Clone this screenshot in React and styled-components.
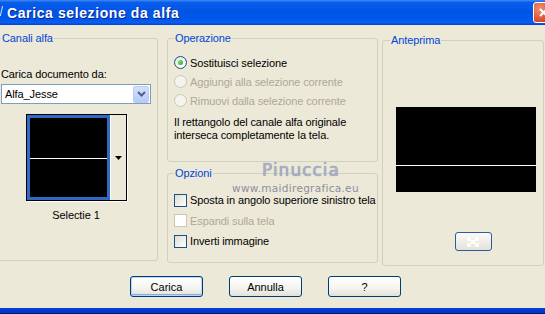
import React from "react";
import styled, { createGlobalStyle } from "styled-components";

const GlobalStyle = createGlobalStyle`
  html, body { margin: 0; padding: 0; background: #ECE9D8; }
  body {
    font-family: "Liberation Sans", Arial, sans-serif;
    font-size: 11px;
    letter-spacing: -0.1px;
    color: #000;
  }
`;

const Window = styled.div`
  width: 545px;
  height: 314px;
  display: flex;
  flex-direction: column;
  overflow: hidden;
  position: relative;
  background: #ECE9D8;
`;

const TitleBar = styled.div`
  height: 25px;
  flex: none;
  display: flex;
  align-items: center;
  overflow: hidden;
  background: linear-gradient(
    #3D8BF7 0%,
    #0A5DEB 10%,
    #0055E5 45%,
    #0058EA 80%,
    #0B5FF0 90%,
    #003FD0 100%
  );
`;

const TitleIcon = styled.svg`
  flex: none;
  width: 3px;
  height: 25px;
`;

const Title = styled.div`
  flex: 1;
  margin-left: 4px;
  color: #fff;
  font-weight: bold;
  font-size: 14px;
  letter-spacing: 0.6px;
  text-shadow: 1px 1px 0 #0A1E8C;
`;

const CloseButton = styled.div`
  flex: none;
  width: 21px;
  height: 21px;
  margin-right: -9px;
  box-sizing: border-box;
  border: 1px solid #fff;
  border-radius: 3px;
  background: radial-gradient(circle at 30% 30%, #F2906E, #D9472A 70%, #C13A1C);
  display: flex;
  align-items: center;
  justify-content: center;
`;

const Body = styled.div`
  flex: 1;
  display: flex;
  flex-direction: column;
  padding-top: 7px;
`;

const Columns = styled.div`
  display: flex;
  align-items: flex-start;
`;

const Group = styled.fieldset`
  margin: 0;
  padding: 0 6px;
  min-width: 0;
  box-sizing: border-box;
  border: 1px solid #D0D0BF;
  border-radius: 3px;
  width: ${(p) => p.$w}px;
  height: ${(p) => p.$h}px;
  margin-left: ${(p) => p.$ml || 0}px;
  margin-top: ${(p) => p.$mt || 0}px;
  display: flex;
  flex-direction: column;
`;

const Legend = styled.legend`
  padding: 0 1px;
  margin-left: ${(p) => p.$ml || 0}px;
  color: #0046D5;
  line-height: 13px;
`;

const MiddleColumn = styled.div`
  width: 211px;
  margin-left: 9px;
  display: flex;
  flex-direction: column;
  gap: 5px;
`;

const Label = styled.div`
  line-height: 13px;
  margin-top: ${(p) => p.$mt || 0}px;
`;

const Select = styled.div`
  margin-top: 3px;
  width: 150px;
  height: 20px;
  box-sizing: border-box;
  border: 1px solid #7F9DB9;
  background: #fff;
  display: flex;
  align-items: center;
  padding-left: 3px;
  padding-right: 1px;
`;

const SelectValue = styled.span`
  flex: 1;
`;

const DropButton = styled.div`
  width: 16px;
  height: 17px;
  border-radius: 2px;
  box-sizing: border-box;
  border: 1px solid #BBCCF0;
  background: linear-gradient(#D4E1FC, #B5C9F7);
  display: flex;
  align-items: center;
  justify-content: center;
`;

const Thumb = styled.div`
  margin: 10px auto 0;
  width: 101px;
  height: 87px;
  box-sizing: border-box;
  border: 1px solid #000;
  box-shadow: 1px 1px 0 #fff;
  display: flex;
`;

const ThumbPreview = styled.div`
  width: 83px;
  box-sizing: border-box;
  border: 3px solid #316AC5;
  background: linear-gradient(#000 40px, #fff 40px, #fff 41px, #000 41px);
`;

const ThumbStrip = styled.div`
  flex: 1;
  border-left: 1px solid #fff;
  background: #ECE9D8;
  display: flex;
  align-items: center;
  justify-content: center;
`;

const Caption = styled.div`
  margin-top: 8px;
  line-height: 13px;
  text-align: center;
`;

const OptionRow = styled.div`
  height: ${(p) => p.$h || 19}px;
  display: flex;
  align-items: center;
  gap: 3px;
  white-space: nowrap;
  color: ${(p) => (p.$disabled ? "#ACA899" : "#000")};
`;

const OptionList = styled.div`
  margin-top: ${(p) => p.$mt}px;
  display: flex;
  flex-direction: column;
`;

const Radio = styled.span`
  position: relative;
  flex: none;
  width: 13px;
  height: 13px;
  box-sizing: border-box;
  border-radius: 50%;
  border: 1px solid ${(p) => (p.$disabled ? "#CAC8BB" : "#1C5180")};
  background: ${(p) =>
    p.$disabled ? "#F4F3EE" : "radial-gradient(circle at 70% 70%, #fff 20%, #DCDCD7)"};

  &::after {
    content: "";
    display: ${(p) => (p.$checked ? "block" : "none")};
    position: absolute;
    left: 3px;
    top: 3px;
    width: 5px;
    height: 5px;
    border-radius: 50%;
    background: radial-gradient(circle at 35% 35%, #6BE46B, #21A121);
  }
`;

const Check = styled.span`
  flex: none;
  width: 13px;
  height: 13px;
  box-sizing: border-box;
  border: 1px solid ${(p) => (p.$disabled ? "#CAC8BB" : "#1C5180")};
  background: ${(p) =>
    p.$disabled ? "#fff" : "linear-gradient(135deg, #DCDCD7, #fff)"};
`;

const Note = styled.p`
  margin: 6px 0 0;
  line-height: 13px;
  white-space: nowrap;
`;

const Preview = styled.div`
  margin: 60px 0 0 7px;
  width: 140px;
  height: 85px;
  background: linear-gradient(#000 58px, #fff 58px, #fff 59px, #000 59px);
`;

const SmallButton = styled.div`
  margin: 40px 0 0 66px;
  width: 37px;
  height: 19px;
  box-sizing: border-box;
  border: 1px solid #2D5A9E;
  border-radius: 3px;
  background: linear-gradient(#FAFAF8, #E4E2D8);
  display: flex;
  align-items: center;
  justify-content: center;
`;

const ButtonRow = styled.div`
  margin-top: 10px;
  padding-left: 130px;
  display: flex;
  gap: 26px;
`;

const Button = styled.button`
  width: 73px;
  height: 21px;
  padding: 0;
  box-sizing: border-box;
  border: 1px solid #003C74;
  border-radius: 3px;
  background: linear-gradient(#FFFFFF, #F3F3EF 60%, #E3E1D7);
  font-family: "Liberation Sans", Arial, sans-serif;
  font-size: 11px;
  color: #000;
  box-shadow: ${(p) =>
    p.$default ? "inset 0 0 0 1px #BCD4F6, inset 0 -1px 0 1px #89ADE4" : "none"};
`;

const BottomEdge = styled.div`
  height: 6px;
  flex: none;
  background: linear-gradient(#0A3FD6 0, #0033CC 5px, #001A66 5px);
`;

const WatermarkName = styled.div`
  position: absolute;
  left: 262px;
  top: 160px;
  font-family: "DejaVu Sans", sans-serif;
  font-size: 17px;
  letter-spacing: 1px;
  line-height: 20px;
  color: #A8AEC8;
  text-shadow: 0 0 1px #7C82A0;
`;

const WatermarkUrl = styled.div`
  position: absolute;
  left: 232px;
  top: 182px;
  font-family: "DejaVu Sans", sans-serif;
  font-size: 10.5px;
  line-height: 12px;
  letter-spacing: 0.3px;
  color: #8E8E9C;
`;

export default function App() {
  return (
    <>
      <GlobalStyle />
      <Window>
        <TitleBar>
          <TitleIcon viewBox="0 0 3 25">
            <path d="M2.6 6 L0.3 16" stroke="#D8E4FF" strokeWidth="1" />
          </TitleIcon>
          <Title>Carica selezione da alfa</Title>
          <CloseButton>
            <svg width="11" height="11" viewBox="0 0 11 11">
              <path d="M2 2 L9 9 M9 2 L2 9" stroke="#fff" strokeWidth="2" />
            </svg>
          </CloseButton>
        </TitleBar>

        <Body>
          <Columns>
            <Group $w={164} $h={229} $ml={-6}>
              <Legend>Canali alfa</Legend>
              <Label $mt={23}>Carica documento da:</Label>
              <Select>
                <SelectValue>Alfa_Jesse</SelectValue>
                <DropButton>
                  <svg width="9" height="6" viewBox="0 0 9 6">
                    <path d="M1 1 L4.5 4.5 L8 1" fill="none" stroke="#4D6185" strokeWidth="2" />
                  </svg>
                </DropButton>
              </Select>
              <Thumb>
                <ThumbPreview />
                <ThumbStrip>
                  <svg width="7" height="4" viewBox="0 0 7 4">
                    <path d="M0 0 H7 L3.5 4 Z" fill="#000" />
                  </svg>
                </ThumbStrip>
              </Thumb>
              <Caption>Selectie 1</Caption>
            </Group>

            <MiddleColumn>
              <Group $w={211} $h={130}>
                <Legend>Operazione</Legend>
                <OptionList $mt={8}>
                  <OptionRow>
                    <Radio $checked />
                    Sostituisci selezione
                  </OptionRow>
                  <OptionRow $disabled>
                    <Radio $disabled />
                    Aggiungi alla selezione corrente
                  </OptionRow>
                  <OptionRow $disabled>
                    <Radio $disabled />
                    Rimuovi dalla selezione corrente
                  </OptionRow>
                </OptionList>
                <Note>
                  Il rettangolo del canale alfa originale
                  <br />
                  interseca completamente la tela.
                </Note>
              </Group>

              <Group $w={211} $h={96}>
                <Legend>Opzioni</Legend>
                <OptionList $mt={10}>
                  <OptionRow $h={20}>
                    <Check />
                    Sposta in angolo superiore sinistro tela
                  </OptionRow>
                  <OptionRow $h={21} $disabled>
                    <Check $disabled />
                    Espandi sulla tela
                  </OptionRow>
                  <OptionRow $h={20}>
                    <Check />
                    Inverti immagine
                  </OptionRow>
                </OptionList>
              </Group>
            </MiddleColumn>

            <Group $w={162} $h={232} $ml={4} $mt={2}>
              <Legend $ml={1}>Anteprima</Legend>
              <Preview />
              <SmallButton>
                <svg width="17" height="10" viewBox="0 0 17 10">
                  <g fill="#fff" opacity="0.9">
                    <rect x="2" y="0" width="4" height="4" />
                    <rect x="10" y="0" width="4" height="4" />
                    <rect x="6" y="3" width="4" height="4" />
                    <rect x="2" y="6" width="4" height="4" />
                    <rect x="10" y="6" width="4" height="4" />
                  </g>
                </svg>
              </SmallButton>
            </Group>
          </Columns>

          <ButtonRow>
            <Button $default>Carica</Button>
            <Button>Annulla</Button>
            <Button>?</Button>
          </ButtonRow>
        </Body>

        <BottomEdge />

        <WatermarkName>Pinuccia</WatermarkName>
        <WatermarkUrl>www.maidiregrafica.eu</WatermarkUrl>
      </Window>
    </>
  );
}
